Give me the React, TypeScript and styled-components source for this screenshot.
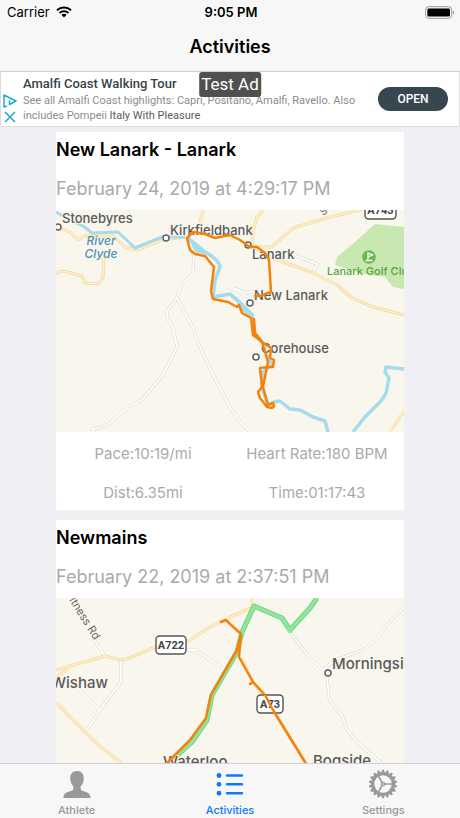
import React from "react";
import styled, { createGlobalStyle } from "styled-components";

const GlobalStyle = createGlobalStyle`
  * { box-sizing: border-box; }
  body { margin: 0; background: #efeff4; font-family: Inter, "Liberation Sans", sans-serif; }
  button { font: inherit; border: 0; margin: 0; cursor: pointer; }
  h1, h2, p, dl, dt, dd, ul { margin: 0; padding: 0; }
`;

const Screen = styled.div`
  display: flex;
  flex-direction: column;
  height: 100vh;
  overflow: hidden;
  color: #000;
`;

const Header = styled.header`
  background: #f7f7f7;
  border-bottom: 1px solid #cfcfd2;
`;

const StatusBar = styled.div`
  display: grid;
  grid-template-columns: 1fr auto 1fr;
  align-items: center;
  height: 24px;
  padding: 0 5px 0 7px;
  font-size: 13px;
`;

const Carrier = styled.span`
  display: flex;
  align-items: center;
  gap: 6px;
`;

const Clock = styled.span`
  font-weight: 600;
`;

const BatterySlot = styled.span`
  display: flex;
  justify-content: flex-end;
`;

const Title = styled.h1`
  height: 47px;
  line-height: 46px;
  font-size: 18px;
  font-weight: 600;
  text-align: center;
`;

const AdBanner = styled.aside`
  position: relative;
  display: flex;
  align-items: center;
  gap: 6px;
  height: 55px;
  padding: 0 11px 0 2px;
  background: #fff;
  border: 1px solid #dcdcdc;
  border-top: 0;
  font-family: Roboto, sans-serif;
`;

const AdMarks = styled.div`
  display: flex;
  flex-direction: column;
  gap: 2px;
  padding-top: 20px;
`;

const MarkButton = styled.button`
  display: flex;
  width: 14px;
  height: 14px;
  padding: 0;
  background: none;
`;

const AdCopy = styled.div`
  flex: 1;
  min-width: 0;
`;

const AdTitle = styled.h2`
  font-size: 13px;
  line-height: 18px;
  font-weight: 500;
  color: #37434a;
`;

const AdText = styled.p`
  font-size: 11px;
  line-height: 15px;
  color: #8c8c8c;
`;

const Advertiser = styled.span`
  color: #5c5c5c;
`;

const OpenButton = styled.button`
  width: 70px;
  height: 24px;
  padding: 0;
  border-radius: 12px;
  background: #37474f;
  color: #fff;
  font-size: 12px;
  font-weight: 500;
`;

const TestBadge = styled.span`
  position: absolute;
  top: 0;
  left: 50%;
  transform: translateX(-50%);
  padding: 0 2px;
  border-radius: 3px;
  background: #505050;
  color: #fff;
  font-size: 17px;
  line-height: 25px;
  white-space: nowrap;
`;

const Feed = styled.main`
  display: flex;
  flex: 1;
  flex-direction: column;
  gap: 10px;
  min-height: 0;
  padding: 5px 56px 0;
  overflow-y: auto;
  scrollbar-width: none;
`;

const Card = styled.article`
  flex: none;
  background: #fff;
`;

const CardTitle = styled.h2`
  font-size: 18px;
  line-height: 35px;
  font-weight: 600;
`;

const CardDate = styled.p`
  font-size: 18px;
  line-height: 43px;
  color: #aaa;
`;

const MapFrame = styled.svg`
  display: block;
  width: 100%;
  height: 222px;
  background: #f9f6ee;
  font-family: Inter, sans-serif;
`;

const Stats = styled.dl`
  display: grid;
  grid-template-columns: 1fr 1fr;
  font-size: 15px;
  line-height: 39px;
  color: #aaa;
`;

const Stat = styled.div`
  display: flex;
  justify-content: center;
  padding-top: 2px;
  height: 39px;
`;

const TabBar = styled.nav`
  display: grid;
  grid-template-columns: repeat(3, 1fr);
  height: 55px;
  background: #f7f7f7;
  border-top: 1px solid #cfcfd4;
`;

const Tab = styled.button<{ $active?: boolean }>`
  display: flex;
  flex-direction: column;
  align-items: center;
  gap: 4px;
  padding: 5px 0 0;
  background: none;
  color: ${(p) => (p.$active ? "#0a7aff" : "#999")};
  font-size: 11px;
  line-height: 14px;
  font-weight: 500;
`;

const WifiIcon = () => (
  <svg width="16" height="12" viewBox="0 0 16 12" aria-hidden="true">
    <g fill="none" stroke="#000" strokeWidth="2.1">
      <path d="M1 4.3C5 .6 11 .6 15 4.3" />
      <path d="M3.5 7C6 4.7 10 4.7 12.5 7" />
    </g>
    <path d="M8 11.4 5.4 8.8Q8 6.8 10.6 8.8Z" />
  </svg>
);

const BatteryIcon = () => (
  <svg width="30" height="13" viewBox="0 0 30 13" aria-hidden="true">
    <rect x=".7" y=".7" width="26" height="11.6" rx="3" fill="none" stroke="#999" />
    <rect x="2.4" y="2.4" width="22.6" height="8.2" rx="1.4" />
    <path d="M28 4.6q2 1.9 0 3.8z" fill="#777" />
  </svg>
);

const AthleteIcon = () => (
  <svg width="28" height="30" viewBox="0 0 28 30" fill="currentColor" aria-hidden="true">
    <path d="M14 2c4.2 0 6.8 2.8 6.8 7.2 0 3.4-1.2 6.2-3.2 8v2.2c0 1.6 1 2 3.2 2.800 4.300 1.300 6.700 2.500 6.700 6.800H.5c0-4.300 2.400-5.500 6.700-6.800 2.200-.8 3.200-1.200 3.200-2.800v-2.200c-2-1.800-3.200-4.600-3.200-8C7.200 4.800 9.800 2 14 2z" />
  </svg>
);

const ListIcon = () => (
  <svg width="28" height="30" viewBox="0 0 28 30" aria-hidden="true">
    <g fill="currentColor">
      <circle cx="3" cy="6.500" r="2.400" />
      <circle cx="3" cy="15.300" r="2.400" />
      <circle cx="3" cy="24.200" r="2.400" />
    </g>
    <path d="M11 6.500H26M11 15.300H26M11 24.200H26" stroke="currentColor" strokeWidth="2.400" strokeLinecap="round" />
  </svg>
);

const GEAR_TEETH = Array.from({ length: 18 }, (_, i) => i * 20);

const GearIcon = () => (
  <svg width="30" height="30" viewBox="0 0 30 30" aria-hidden="true">
    <g fill="none" stroke="currentColor">
      <circle cx="15" cy="15" r="10.400" strokeWidth="3.400" />
      <path d="M15 15H25M15 15 10 6.300M15 15 10 23.700" strokeWidth="1.600" />
    </g>
    <circle cx="15" cy="15" r="2.300" fill="currentColor" />
    <circle cx="15" cy="15" r=".8" fill="#f7f7f7" />
    {GEAR_TEETH.map((a) => (
      <path key={a} d="M13.400 3.500 14.100.8H15.900L16.600 3.500Z" fill="currentColor" transform={`rotate(${a} 15 15)`} />
    ))}
  </svg>
);

type Place = { x: number; y: number; size: number; text: string };

const PlaceLabels = ({ places }: { places: Place[] }) => (
  <g fill="#5a5a5a" stroke="#f9f6ee" strokeWidth="2" paintOrder="stroke" fontWeight="500">
    {places.map((p) => (
      <text key={p.text} x={p.x} y={p.y} fontSize={p.size}>{p.text}</text>
    ))}
  </g>
);

const Dots = ({ points }: { points: number[][] }) => (
  <g fill="#fff" stroke="#606060" strokeWidth="1.500">
    {points.map(([x, y]) => <circle key={`${x}-${y}`} cx={x} cy={y} r="3" />)}
  </g>
);

const Shield = ({ x, y, width, text }: { x: number; y: number; width: number; text: string }) => (
  <g>
    <rect x={x} y={y} width={width} height="18" rx="3.500" fill="#fff" stroke="#555" strokeWidth="1.400" />
    <text x={x + width / 2} y={y + 13} fontSize="11" fontWeight="700" fontFamily="Roboto, sans-serif" textAnchor="middle" fill="#444">{text}</text>
  </g>
);

const Roads = ({ major, minor }: { major: string; minor: string }) => (
  <g fill="none" strokeLinejoin="round">
    <path d={minor} stroke="#dcd9d3" strokeWidth="3" />
    <path d={minor} stroke="#fff" strokeWidth="1.800" />
    <path d={major} stroke="#f3d79b" strokeWidth="3" />
    <path d={major} stroke="#fff0c8" strokeWidth="1.600" />
  </g>
);

const Route = ({ d }: { d: string }) => (
  <path d={d} fill="none" stroke="#f5820b" strokeWidth="2.500" strokeLinejoin="round" strokeLinecap="round" />
);

const LanarkMap = () => (
  <MapFrame viewBox="0 0 348 222" preserveAspectRatio="xMidYMid slice" role="img" aria-label="Route map of New Lanark">
    <path d="M319 14 348 17V79L337 77 329 67 308 64 279 55 281 47 299 32Z" fill="#c9e8b1" />
    <Roads
      minor="M134 38 138 45 137 62Q136 67 126 73L121 88 111 101V107L117 118 121 137 107 165 86 190 72 197 54 213Q46 218 37 219V222M121 88 137 118 141 130 157 165 174 197 184 212 194 222M231 42 261 54 257 62M174 78 194 88M178 78 190 83 202 80"
      major="M0 17 14 22 22 30 29 26H57L69 37 81 40 106 30 129 27M0 64Q5 60 11 62L26 66 29 73 42 74 47 68 48 45M147 0 144 13 139 22M207 0 201 7 197 22 196 37H216L237 18 274 7 309-1M197 37 217 48 257 63 281 75 296 88 317 97 348 105M334 222 348 201"
    />
    <g fill="none" stroke="#a4dcec" strokeLinejoin="round">
      <path d="M0 2 14 10 27 16 36 23 62 22 79 38 106 27 129 27" strokeWidth="3" />
      <path d="M132 28 141 37 154 45Q164 52 164 57L159 70 157 87 174 84 186 95 196 105 198 123 207 133 211 145 216 155 207 162 206 178 212 195" strokeWidth="3.500" />
      <path d="M212 195 218 192 224 191 234 199 244 200 257 207 269 211 272 222M297 222 309 207 324 192Q331 184 331 178L333 168 329 162 330 157 348 159" strokeWidth="3.500" />
    </g>
    <path d="M131 25 147 38 153 45 139 42ZM174 82 183 89 198 104V112L186 100ZM198 118 205 130 200 128Z" fill="#a4dcec" />
    <circle cx="313" cy="47" r="6.800" fill="#6cb950" />
    <path d="M312 50.500V43L316.500 45 312 47M309.500 50.500H316.500" fill="none" stroke="#fff" strokeWidth="1.300" />
    <text x="271" y="65" fontSize="11" fontWeight="500" fill="#58a53a">Lanark Golf Clu</text>
    <g fill="#4b91b5" fontSize="12" fontStyle="italic" fontWeight="500" textAnchor="middle">
      <text x="45" y="35">River</text>
      <text x="45" y="48">Clyde</text>
    </g>
    <text x="267" y="6" fontSize="10" fill="#777" transform="rotate(-35 267 6)">S</text>
    <PlaceLabels
      places={[
        { x: 6, y: 13, size: 13, text: "Stonebyres" },
        { x: 114, y: 25, size: 13, text: "Kirkfieldbank" },
        { x: 196, y: 49, size: 13, text: "Lanark" },
        { x: 198, y: 90, size: 13, text: "New Lanark" },
        { x: 205, y: 143, size: 13, text: "Corehouse" },
      ]}
    />
    <Dots points={[[2, 17], [110, 28], [192, 35], [194, 93], [200, 147]]} />
    <Shield x={309} y={-9} width={31} text="A743" />
    <Route d="M199 86H204L215 82 213 50 209 43 201 37H194L184 30 174 25 159 28 149 24 137 22 131 28 134 40 139 44 149 46 158 57 155 81 157 89 172 92 181 97 183 95 186 103 195 108 197 125 206 132 215 138 214 148 218 150 217 157H212L204 158 206 177 202 182 204 188 211 197 216 198 218 196 217 193 212 195 207 177 212 152 206 132 199 123 198 109" />
  </MapFrame>
);

const NewmainsMap = () => (
  <MapFrame viewBox="0 0 348 222" preserveAspectRatio="xMidYMid slice" role="img" aria-label="Route map of Newmains">
    <Roads
      minor="M37 40 49 58M65 62V84L44 112 30 134M21 90 44 112M131 52H139L167 70M234 34 254 60 267 72 271 80 273 99Q276 109 286 117L291 132 302 145 324 164 350 185M267 72 279 62 307 52Q317 47 331 27L348 9M198 8 207 0"
      major="M0 72 49 58 64 62 71 61 99 49 131 44 154 29 174 19 197 9 195 0M0 104 29 134 46 150 64 164 90 190M0 80 14 69M185 60 197 84 217 112 249 164 280 215"
    />
    <path d="M261 0 254 10 234 32 226 20 198 8 186 34 181 54 156 97 151 122 136 144 114 164 90 185" fill="none" stroke="#68ca79" strokeWidth="5" strokeLinejoin="round" />
    <path d="M261 0 254 10 234 32 226 20 198 8 186 34 181 54 156 97 151 122 136 144 114 164 90 185" fill="none" stroke="#8ce79a" strokeWidth="3.600" strokeLinejoin="round" />
    <circle cx="234" cy="32" r="3" fill="#8ce79a" />
    <text x="13" y="2" fontSize="11" fill="#686868" transform="rotate(58 13 2)">ltness Rd</text>
    <PlaceLabels
      places={[
        { x: -5, y: 90, size: 15, text: "Wishaw" },
        { x: 276, y: 71, size: 15, text: "Morningsi" },
        { x: 107, y: 169, size: 15, text: "Waterloo" },
        { x: 257, y: 168, size: 15, text: "Bogside" },
      ]}
    />
    <Dots points={[[272, 75]]} />
    <Shield x={100} y={38} width={30} text="A722" />
    <Shield x={201} y={97} width={26} text="A73" />
    <Route d="M165 24 170 22 174 26 185 36 183 59 197 84 194 86M197 84 209 97 217 112 249 164 280 215M185 36 181 52 174 64 155 97 150 120 134 142 112 164 90 185" />
  </MapFrame>
);

type Activity = {
  name: string;
  date: string;
  map: React.ReactNode;
  stats: [string, string][];
};

const ACTIVITIES: Activity[] = [
  {
    name: "New Lanark - Lanark",
    date: "February 24, 2019 at 4:29:17 PM",
    map: <LanarkMap />,
    stats: [["Pace:", "10:19/mi"], ["Heart Rate:", "180 BPM"], ["Dist:", "6.35mi"], ["Time:", "01:17:43"]],
  },
  {
    name: "Newmains",
    date: "February 22, 2019 at 2:37:51 PM",
    map: <NewmainsMap />,
    stats: [],
  },
];

export default function App() {
  return (
    <Screen>
      <GlobalStyle />
      <Header>
        <StatusBar>
          <Carrier>Carrier <WifiIcon /></Carrier>
          <Clock>9:05 PM</Clock>
          <BatterySlot><BatteryIcon /></BatterySlot>
        </StatusBar>
        <Title>Activities</Title>
      </Header>
      <AdBanner>
        <AdMarks>
          <MarkButton aria-label="Ad choices">
            <svg width="14" height="14" viewBox="0 0 14 14" fill="none" stroke="#1ba9cf" strokeWidth="1.500" strokeLinejoin="round">
              <path d="M4 12 1 13V1L13 7 6.500 10.500V6.200M6.500 3.800V5" />
            </svg>
          </MarkButton>
          <MarkButton aria-label="Close ad">
            <svg width="14" height="14" viewBox="0 0 14 14" fill="none" stroke="#1ba9cf" strokeWidth="1.500">
              <path d="M2 2 12 12M12 2 2 12" />
            </svg>
          </MarkButton>
        </AdMarks>
        <AdCopy>
          <AdTitle>Amalfi Coast Walking Tour</AdTitle>
          <AdText>
            See all Amalfi Coast highlights: Capri, Positano, Amalfi, Ravello. Also includes Pompeii{" "}
            <Advertiser>Italy With Pleasure</Advertiser>
          </AdText>
        </AdCopy>
        <OpenButton>OPEN</OpenButton>
        <TestBadge>Test Ad</TestBadge>
      </AdBanner>
      <Feed>
        {ACTIVITIES.map((a) => (
          <Card key={a.name}>
            <CardTitle>{a.name}</CardTitle>
            <CardDate>{a.date}</CardDate>
            {a.map}
            {a.stats.length > 0 && (
              <Stats>
                {a.stats.map(([label, value]) => (
                  <Stat key={label}><dt>{label}</dt><dd>{value}</dd></Stat>
                ))}
              </Stats>
            )}
          </Card>
        ))}
      </Feed>
      <TabBar>
        <Tab><AthleteIcon />Athlete</Tab>
        <Tab $active aria-current="page"><ListIcon />Activities</Tab>
        <Tab><GearIcon />Settings</Tab>
      </TabBar>
    </Screen>
  );
}
